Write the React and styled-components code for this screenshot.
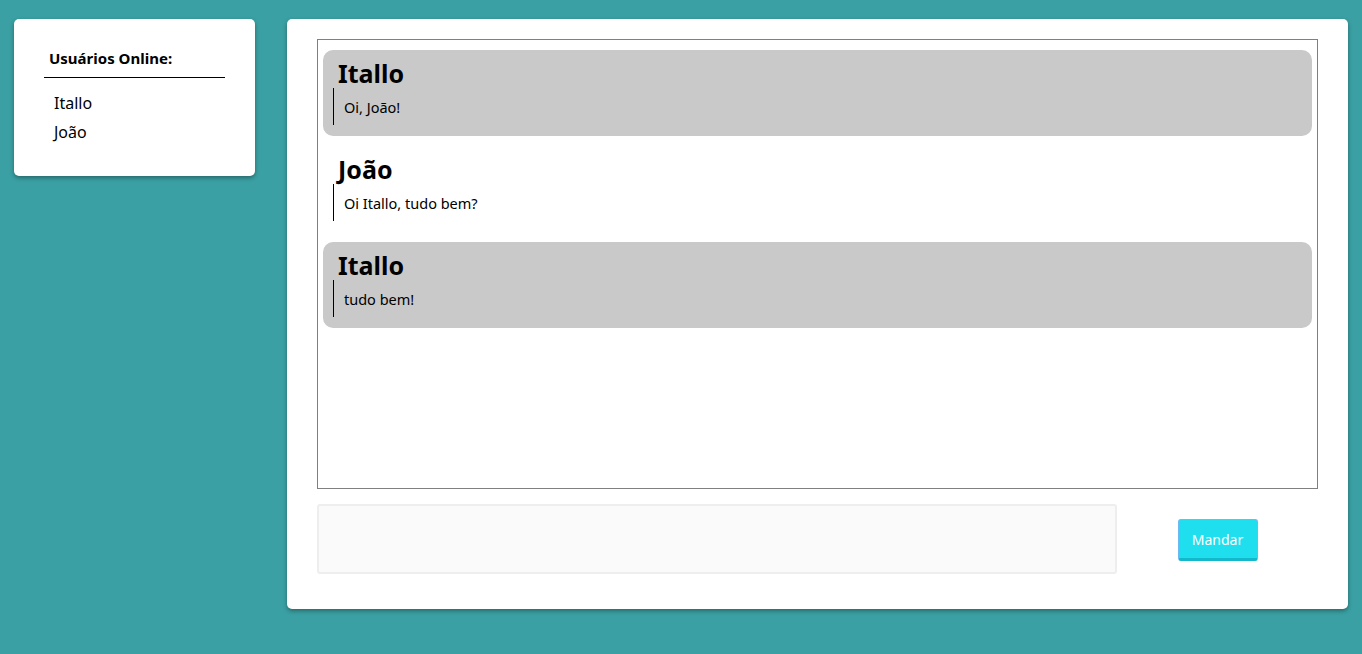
import React from "react";
import styled, { createGlobalStyle } from "styled-components";

const Global = createGlobalStyle`
  html, body { margin: 0; padding: 0; }
  body {
    background: #3aa0a3;
    font-family: "Noto Sans", "DejaVu Sans", sans-serif;
    color: #000;
  }
  * { box-sizing: border-box; }
`;

const Page = styled.div`
  display: flex;
  align-items: flex-start;
  gap: 32px;
  padding: 19px 14px;
  min-height: 654px;
`;

const Card = styled.div`
  background: #fff;
  border-radius: 5px;
  box-shadow: 0 2px 4px rgba(0, 0, 0, 0.35);
`;

const Sidebar = styled(Card)`
  width: 241px;
  flex: none;
  padding: 29px 30px 29px;
`;

const SideTitle = styled.div`
  font-size: 15px;
  font-weight: 700;
  line-height: 20px;
  padding: 0 5px 9px;
  border-bottom: 1px solid #000;
`;

const UserList = styled.ul`
  list-style: none;
  margin: 11px 0 0;
  padding: 0 0 0 10px;
`;

const User = styled.li`
  font-size: 16px;
  line-height: 29px;
`;

const Main = styled(Card)`
  flex: 1;
  padding: 20px 30px 35px;
`;

const ChatBox = styled.div`
  height: 450px;
  border: 1px solid #808080;
  padding: 10px 5px;
  display: flex;
  flex-direction: column;
  gap: 10px;
  overflow: hidden;
`;

const Message = styled.div`
  background: ${(p) => (p.$shaded ? "#c9c9c9" : "#fff")};
  border-radius: 10px;
  padding: 9px 10px 11px;
`;

const Author = styled.div`
  font-size: 25px;
  font-weight: 700;
  line-height: 28px;
  margin-left: 5px;
`;

const Body = styled.div`
  margin-top: 1px;
  border-left: 1px solid #000;
  padding: 11px 0 9px 10px;
  font-size: 14.5px;
  line-height: 17px;
`;

const Composer = styled.div`
  display: flex;
  align-items: center;
  margin-top: 15px;
`;

const Input = styled.textarea`
  width: 800px;
  height: 70px;
  flex: none;
  background: #fafafa;
  border: 2px solid #eeeeee;
  border-radius: 3px;
  resize: none;
  outline: none;
  font-family: inherit;
`;

const ButtonSlot = styled.div`
  flex: 1;
  display: flex;
  justify-content: center;
  padding-top: 2px;
`;

const SendButton = styled.button`
  width: 80px;
  height: 42px;
  background: #1fdfee;
  border: 1px solid #6cb9f3;
  border-bottom: 3px solid #13b8cb;
  border-radius: 3px;
  color: #fff;
  font-family: "Noto Sans", "DejaVu Sans", sans-serif;
  font-size: 14px;
  padding: 0;
  cursor: pointer;
`;

const users = ["Itallo", "João"];
const messages = [
  { author: "Itallo", text: "Oi, João!" },
  { author: "João", text: "Oi Itallo, tudo bem?" },
  { author: "Itallo", text: "tudo bem!" },
];

export default function App() {
  return (
    <>
      <Global />
      <Page>
        <Sidebar>
          <SideTitle>Usuários Online:</SideTitle>
          <UserList>
            {users.map((u) => (
              <User key={u}>{u}</User>
            ))}
          </UserList>
        </Sidebar>
        <Main>
          <ChatBox>
            {messages.map((m, i) => (
              <Message key={i} $shaded={m.author === "Itallo"}>
                <Author>{m.author}</Author>
                <Body>{m.text}</Body>
              </Message>
            ))}
          </ChatBox>
          <Composer>
            <Input />
            <ButtonSlot>
              <SendButton>Mandar</SendButton>
            </ButtonSlot>
          </Composer>
        </Main>
      </Page>
    </>
  );
}
